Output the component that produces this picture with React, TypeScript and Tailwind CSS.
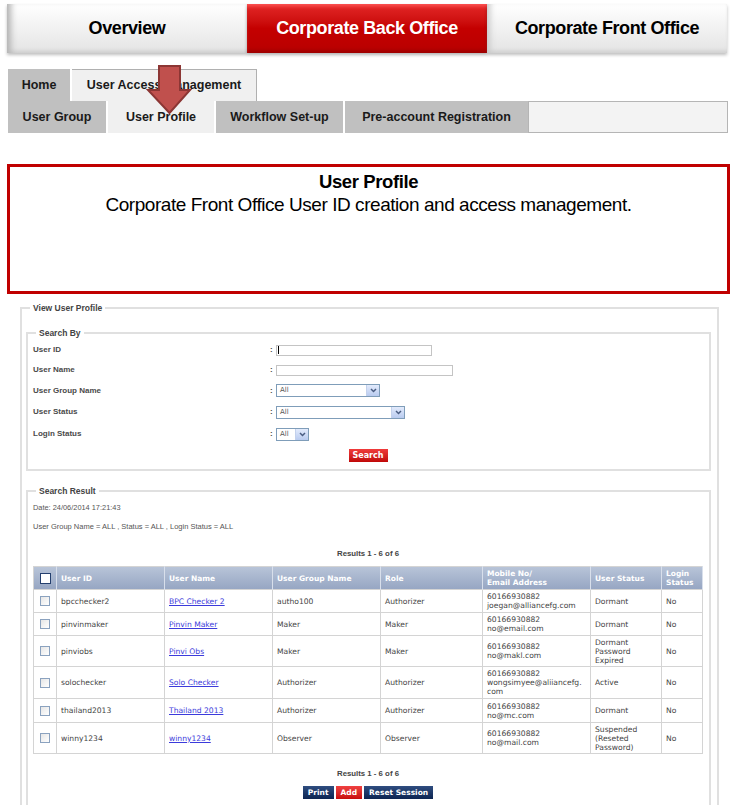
import React from 'react'

const arial = "font-['Liberation_Sans',Arial,sans-serif]"
const verdana = "font-['DejaVu_Sans',Verdana,sans-serif]"

const rows = [
  { id: 'bpcchecker2', name: 'BPC Checker 2', group: 'autho100', role: 'Authorizer', mobile: ['60166930882', 'joegan@alliancefg.com'], status: ['Dormant'], h: 'h-[23px]' },
  { id: 'pinvinmaker', name: 'Pinvin Maker', group: 'Maker', role: 'Maker', mobile: ['60166930882', 'no@email.com'], status: ['Dormant'], h: 'h-[23px]' },
  { id: 'pinviobs', name: 'Pinvi Obs', group: 'Maker', role: 'Maker', mobile: ['60166930882', 'no@makl.com'], status: ['Dormant', 'Password', 'Expired'], h: 'h-[31px]' },
  { id: 'solochecker', name: 'Solo Checker', group: 'Authorizer', role: 'Authorizer', mobile: ['60166930882', 'wongsimyee@aliiancefg.', 'com'], status: ['Active'], h: 'h-[32px]' },
  { id: 'thailand2013', name: 'Thailand 2013', group: 'Authorizer', role: 'Authorizer', mobile: ['60166930882', 'no@mc.com'], status: ['Dormant'], h: 'h-[24px]' },
  { id: 'winny1234', name: 'winny1234', group: 'Observer', role: 'Observer', mobile: ['60166930882', 'no@mail.com'], status: ['Suspended', '(Reseted', 'Password)'], h: 'h-[31px]' },
]

function Select({ w }: { w: string }) {
  return (
    <div className={`flex h-[13px] items-center border border-[#7f9db9] bg-white ${w}`}>
      <span className={`flex-1 pl-[3px] text-[7px] leading-none text-[#555] ${verdana}`}>All</span>
      <span className="flex h-full w-[13px] items-center justify-center border-l border-[#c3d1ec] bg-gradient-to-b from-[#e3ebfc] to-[#b9cbef]">
        <svg width="7" height="5" viewBox="0 0 7 5">
          <path d="M1 1l2.5 2.5L6 1" stroke="#4a5d82" strokeWidth="1.5" fill="none" />
        </svg>
      </span>
    </div>
  )
}

function Checkbox({ head }: { head?: boolean }) {
  return head ? (
    <span className="mx-auto block h-[11px] w-[11px] border-[1.5px] border-[#243f6e] bg-white" />
  ) : (
    <span className="mx-auto block h-[10px] w-[10px] border border-[#8ba2bf] bg-gradient-to-br from-[#e6e6e6] to-white" />
  )
}

function SearchRow({ label, h, children }: { label: string; h: string; children: React.ReactNode }) {
  return (
    <div className={`flex items-center ${h}`}>
      <span className={`w-[237px] text-[8px] font-bold text-[#4a4a4a] ${arial}`}>{label}</span>
      <span className={`w-[6px] text-[8px] font-bold text-[#4a4a4a] ${arial}`}>:</span>
      {children}
    </div>
  )
}

function NavButton({ label, red }: { label: string; red?: boolean }) {
  return (
    <span
      className={`flex h-[13px] items-center justify-center px-[5px] text-[7.5px] font-bold text-white ${verdana} ${
        red
          ? 'bg-gradient-to-b from-[#f04040] to-[#c80a0a]'
          : 'bg-gradient-to-b from-[#2f4d80] to-[#0d2552]'
      }`}
    >
      {label}
    </span>
  )
}

export default function App() {
  const th = `border-r border-[#d8dfeb] px-[4px] text-left align-middle text-[7.5px] font-bold leading-[9px] text-white ${verdana}`
  const td = `border border-[#d4d4d4] px-[4px] align-middle text-[7.6px] leading-[9px] text-[#444] ${verdana}`

  return (
    <div className="h-[805px] w-[735px] overflow-hidden bg-white">
      {/* top module tabs */}
      <div className={`flex pl-[7px] pt-[4px] ${arial}`}>
        <div className="flex h-[49px] w-[240px] items-center justify-center bg-gradient-to-b from-white to-[#e4e4e4] text-[18px] font-bold tracking-[-0.4px] text-black shadow-[inset_8px_0_6px_-4px_#b4b4b4,inset_0_-4px_4px_-2px_#cfcfcf,0_2px_3px_rgba(0,0,0,0.25)]">
          Overview
        </div>
        <div className="flex h-[49px] w-[240px] items-center justify-center bg-gradient-to-b from-[#e42626] via-[#c40000] to-[#b80000] text-[18px] font-bold tracking-[-0.4px] text-white shadow-[inset_0_4px_4px_-2px_#ff5a5a,inset_0_-4px_4px_-2px_#980000,0_2px_3px_rgba(0,0,0,0.3)]">
          Corporate Back Office
        </div>
        <div className="flex h-[49px] w-[240px] items-center justify-center bg-gradient-to-b from-white to-[#e4e4e4] text-[18px] font-bold tracking-[-0.4px] text-black shadow-[inset_7px_0_6px_-4px_#c8c8c8,inset_0_-4px_4px_-2px_#cfcfcf,0_2px_3px_rgba(0,0,0,0.25)]">
          Corporate Front Office
        </div>
      </div>

      {/* sub navigation */}
      <div className={`relative ml-[8px] mt-[16px] w-[720px] text-[12.5px] font-bold text-[#1a1a1a] ${arial}`}>
        <div className="flex h-[32px]">
          <div className="flex w-[64px] items-center justify-center border-r-2 border-white bg-[#c0c0c0]">Home</div>
          <div className="flex w-[185px] items-center justify-center border-r border-t border-[#b0b0b0] bg-[#f0f0f0]">
            User Access Management
          </div>
        </div>
        <div className="flex h-[32px]">
          <div className="flex w-[100px] items-center justify-center border-r-2 border-white bg-[#c0c0c0]">User Group</div>
          <div className="flex w-[108px] items-center justify-center border-r-2 border-white bg-[#f0f0f0]">User Profile</div>
          <div className="flex w-[129px] items-center justify-center border-r-2 border-white bg-[#c0c0c0]">Workflow Set-up</div>
          <div className="flex w-[183px] items-center justify-center bg-[#c0c0c0]">Pre-account Registration</div>
          <div className="flex-1 border border-[#b5b5b5] bg-[#f3f3f3]" />
        </div>
        <svg className="absolute left-[134px] top-[-6px]" width="52" height="52" viewBox="0 0 52 52">
          <polygon points="17,3 38,3 38,27 48,27 27.5,50 6,27 17,27" fill="#c0504d" stroke="#8c3634" strokeWidth="2" />
        </svg>
      </div>

      {/* description box */}
      <div className={`ml-[7px] mt-[31px] flex h-[130px] w-[723px] flex-col items-center border-[3px] border-[#c00000] pt-[4px] text-black ${arial}`}>
        <div className="text-[18.5px] font-bold leading-[22px] tracking-[-0.4px]">User Profile</div>
        <div className="text-[19px] leading-[23px] tracking-[-0.45px]">
          Corporate Front Office User ID creation and access management.
        </div>
      </div>

      {/* view user profile */}
      <fieldset className="ml-[20px] mt-[9px] w-[698px] border-2 border-[#e0e0e0] pb-[10px] pl-[4px] pr-[6px] pt-[15px]">
        <legend className={`ml-[4px] px-[3px] text-[8.5px] font-bold leading-[10px] text-[#444] ${arial}`}>View User Profile</legend>

        <fieldset className="border-2 border-[#e0e0e0] pb-[7px] pl-[5px] pr-[6px] pt-[2px]">
          <legend className={`ml-[3px] px-[3px] text-[8.5px] font-bold leading-[10px] text-[#444] ${arial}`}>Search By</legend>
          <SearchRow label="User ID" h="h-[20px]">
            <div className="flex h-[11px] w-[156px] items-center border border-[#c4c4c4] bg-white pl-[1px]">
              <span className="h-[8px] w-px bg-black" />
            </div>
          </SearchRow>
          <SearchRow label="User Name" h="h-[20px]">
            <div className="h-[11px] w-[177px] border border-[#c4c4c4] bg-white" />
          </SearchRow>
          <SearchRow label="User Group Name" h="h-[21px]">
            <Select w="w-[104px]" />
          </SearchRow>
          <SearchRow label="User Status" h="h-[22px]">
            <Select w="w-[129px]" />
          </SearchRow>
          <SearchRow label="Login Status" h="h-[22px]">
            <Select w="w-[33px]" />
          </SearchRow>
          <div className="mt-[4px] flex justify-center">
            <span className={`flex h-[13px] w-[39px] items-center justify-center bg-gradient-to-b from-[#f03a3a] to-[#c00606] text-[8px] font-bold text-white ${verdana}`}>
              Search
            </span>
          </div>
        </fieldset>

        <fieldset className="mt-[15px] border-2 border-[#e0e0e0] pb-[10px] pl-[5px] pr-[6px] pt-[7px]">
          <legend className={`ml-[3px] px-[3px] text-[8.5px] font-bold leading-[10px] text-[#444] ${arial}`}>Search Result</legend>
          <div className={`text-[7.4px] leading-[10px] text-[#555] ${arial}`}>Date: 24/06/2014 17:21:43</div>
          <div className={`mt-[9px] text-[7.5px] leading-[10px] text-[#555] ${arial}`}>
            User Group Name = ALL , Status = ALL , Login Status = ALL
          </div>
          <div className={`mt-[17px] text-center text-[7.8px] font-bold leading-[10px] text-[#444] ${arial}`}>Results 1 - 6 of 6</div>

          <table className="mt-[7px] w-[669px] table-fixed border-collapse border border-[#d4d4d4]">
            <colgroup>
              <col className="w-[23px]" />
              <col className="w-[108px]" />
              <col className="w-[108px]" />
              <col className="w-[108px]" />
              <col className="w-[102px]" />
              <col className="w-[108px]" />
              <col className="w-[71px]" />
              <col className="w-[41px]" />
            </colgroup>
            <thead>
              <tr className="h-[23px] bg-gradient-to-b from-[#b8c4d8] to-[#95a5c2]">
                <th className={th}>
                  <Checkbox head />
                </th>
                <th className={th}>User ID</th>
                <th className={th}>User Name</th>
                <th className={th}>User Group Name</th>
                <th className={th}>Role</th>
                <th className={th}>
                  Mobile No/
                  <br />
                  Email Address
                </th>
                <th className={th}>User Status</th>
                <th className={th}>
                  Login
                  <br />
                  Status
                </th>
              </tr>
            </thead>
            <tbody>
              {rows.map((r) => (
                <tr key={r.id} className={r.h}>
                  <td className={td}>
                    <Checkbox />
                  </td>
                  <td className={td}>{r.id}</td>
                  <td className={td}>
                    <span className="text-[#3b3bdb] underline">{r.name}</span>
                  </td>
                  <td className={td}>{r.group}</td>
                  <td className={td}>{r.role}</td>
                  <td className={td}>
                    {r.mobile.map((m) => (
                      <div key={m}>{m}</div>
                    ))}
                  </td>
                  <td className={td}>
                    {r.status.map((s) => (
                      <div key={s}>{s}</div>
                    ))}
                  </td>
                  <td className={td}>No</td>
                </tr>
              ))}
            </tbody>
          </table>

          <div className={`mt-[15px] text-center text-[7.8px] font-bold leading-[10px] text-[#444] ${arial}`}>Results 1 - 6 of 6</div>
          <div className="mt-[7px] flex justify-center gap-[2px]">
            <NavButton label="Print" />
            <NavButton label="Add" red />
            <NavButton label="Reset Session" />
          </div>
        </fieldset>
      </fieldset>
    </div>
  )
}
